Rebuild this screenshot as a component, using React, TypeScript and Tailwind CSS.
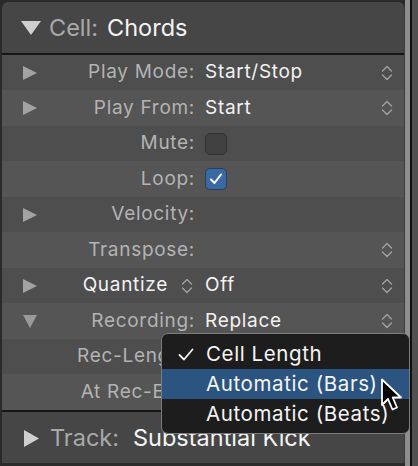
import React from "react";

const font = { fontFamily: "Inter, 'Noto Sans', 'Liberation Sans', sans-serif" };

function RightTri({ color = "#a3a3a3" }: { color?: string }) {
  return (
    <svg width="14" height="14" viewBox="0 0 14 14" className="block">
      <polygon points="0,0 14,7 0,14" fill={color} />
    </svg>
  );
}

function DownTri({ w = 14, h = 13, color = "#9a9a9a" }: { w?: number; h?: number; color?: string }) {
  return (
    <svg width={w} height={h} viewBox={`0 0 ${w} ${h}`} className="block">
      <polygon points={`0,0 ${w},0 ${w / 2},${h}`} fill={color} />
    </svg>
  );
}

function UpDown() {
  return (
    <svg width="12" height="16" viewBox="0 0 12 16" className="block">
      <path d="M1.5 6 L6 1.5 L10.5 6" fill="none" stroke="#a0a0a0" strokeWidth="1.4" strokeLinecap="round" strokeLinejoin="round" />
      <path d="M1.5 10 L6 14.5 L10.5 10" fill="none" stroke="#a0a0a0" strokeWidth="1.4" strokeLinecap="round" strokeLinejoin="round" />
    </svg>
  );
}

type RowProps = {
  tri?: "right" | "down" | null;
  label: React.ReactNode;
  value?: React.ReactNode;
  chevron?: boolean;
  light?: boolean;
  h: number;
};

function Row({ tri, label, value, chevron, light, h }: RowProps) {
  return (
    <div
      className={`flex items-center shrink-0 ${light ? "bg-[#555555]" : "bg-[#4e4e4e]"}`}
      style={{ height: h }}
    >
      <div className="w-[21px] shrink-0" />
      <div className="w-[14px] shrink-0 flex items-center">
        {tri === "right" && <RightTri />}
        {tri === "down" && <DownTri />}
      </div>
      <div className="w-[158px] shrink-0 flex justify-end items-center text-[19px] tracking-[0.7px] text-[#b3b3b3] whitespace-nowrap">
        {label}
      </div>
      <div className="ml-[10px] flex-1 flex items-center text-[19px] tracking-[0.7px] text-[#f2f2f2] whitespace-nowrap">
        {value}
      </div>
      <div className="w-[12px] mr-[11px] shrink-0 flex items-center">{chevron && <UpDown />}</div>
    </div>
  );
}

export default function App() {
  return (
    <div className="w-[418px] h-[466px] bg-[#2a2a2a] flex relative overflow-hidden" style={font}>
      <div className="w-[403px] ml-[2px] mt-[2px] h-[461px] rounded-t-[7px] bg-[#4e4e4e] flex flex-col overflow-hidden border-r border-[#3a3a3a]">
        {/* header */}
        <div className="h-[51px] shrink-0 bg-[#464646] flex items-center">
          <div className="ml-[19px] mr-[8px]">
            <DownTri w={20} h={14} color="#cfcfcf" />
          </div>
          <span className="text-[23.5px] text-[#a9a9a9]">Cell:</span>
          <span className="text-[23.5px] text-[#f4f4f4] ml-[9px]">Chords</span>
        </div>
        <div className="h-[2px] shrink-0 bg-[#151515]" />
        <Row h={35} tri="right" label="Play Mode:" value="Start/Stop" chevron />
        <Row h={36} light tri="right" label="Play From:" value="Start" chevron />
        <Row
          h={35}
          label="Mute:"
          value={<div className="w-[22px] h-[22px] rounded-[5px] bg-[#414141] border border-[#303030]" />}
        />
        <Row
          h={36}
          light
          label="Loop:"
          value={
            <div className="w-[22px] h-[22px] rounded-[5px] bg-[#3a6aa3] border border-[#2a3f5c] flex items-center justify-center">
              <svg width="14" height="12" viewBox="0 0 14 12">
                <path d="M2 6.5 L5.5 10 L12 1.5" fill="none" stroke="white" strokeWidth="2" strokeLinecap="round" strokeLinejoin="round" />
              </svg>
            </div>
          }
        />
        <Row h={35} tri="right" label="Velocity:" />
        <Row h={36} light label="Transpose:" chevron />
        <Row
          h={35}
          tri="right"
          label={
            <span className="flex items-center">
              <span className="text-[#f2f2f2]">Quantize</span>
              <span className="ml-[13px] mr-[2px]">
                <UpDown />
              </span>
            </span>
          }
          value="Off"
          chevron
        />
        <Row h={36} light tri="down" label="Recording:" value="Replace" chevron />
        <Row h={35} label="Rec-Length:" value="" />
        <Row h={36} light label="At Rec-End:" value="" />
        <div className="h-[2px] shrink-0 bg-[#151515]" />
        <div className="flex-1 bg-[#464646] flex items-center pt-[1px]">
          <div className="ml-[22px] mr-[11px]">
            <svg width="15" height="17" viewBox="0 0 15 17" className="block">
              <polygon points="0,0 15,8.5 0,17" fill="#d0d0d0" />
            </svg>
          </div>
          <span className="text-[23.5px] text-[#a9a9a9]">Track:</span>
          <span className="text-[23.5px] text-[#f4f4f4] ml-[14px]">Substantial Kick</span>
        </div>
      </div>
      {/* right divider */}
      <div className="w-[5px] bg-[#8e8e8e] shrink-0" />
      <div className="w-[2px] bg-[#0e0e0e] shrink-0" />
      <div className="flex-1 bg-[#505050]" />

      {/* popup menu */}
      <div className="absolute left-[161px] top-[333px] w-[249px] h-[101px] rounded-[7px] border border-[#7b7b7b] bg-[#1d1d1d] overflow-hidden pt-[5px] text-[20.5px] tracking-[0.6px] text-[#f4f4f4] whitespace-nowrap">
        <div className="h-[30px] flex items-center">
          <div className="w-[44px] flex justify-end pr-[12px]">
            <svg width="16" height="13" viewBox="0 0 16 13">
              <path d="M1.5 7 L6 11.5 L14.5 1.5" fill="none" stroke="#f4f4f4" strokeWidth="1.8" strokeLinecap="round" strokeLinejoin="round" />
            </svg>
          </div>
          <span>Cell Length</span>
        </div>
        <div className="h-[30px] flex items-center bg-[#2b5480] pl-[44px]">Automatic (Bars)</div>
        <div className="h-[30px] flex items-center pl-[44px]">Automatic (Beats)</div>
      </div>

      {/* cursor */}
      <svg className="absolute left-[380px] top-[378px]" width="26" height="36" viewBox="0 0 26 36">
        <path
          d="M2 1.5 L2 27 L8 21 L12.5 31.5 L17 29.5 L12.7 19.5 L21 19.5 Z"
          fill="#000"
          stroke="#fff"
          strokeWidth="1.8"
          strokeLinejoin="round"
        />
      </svg>
    </div>
  );
}
